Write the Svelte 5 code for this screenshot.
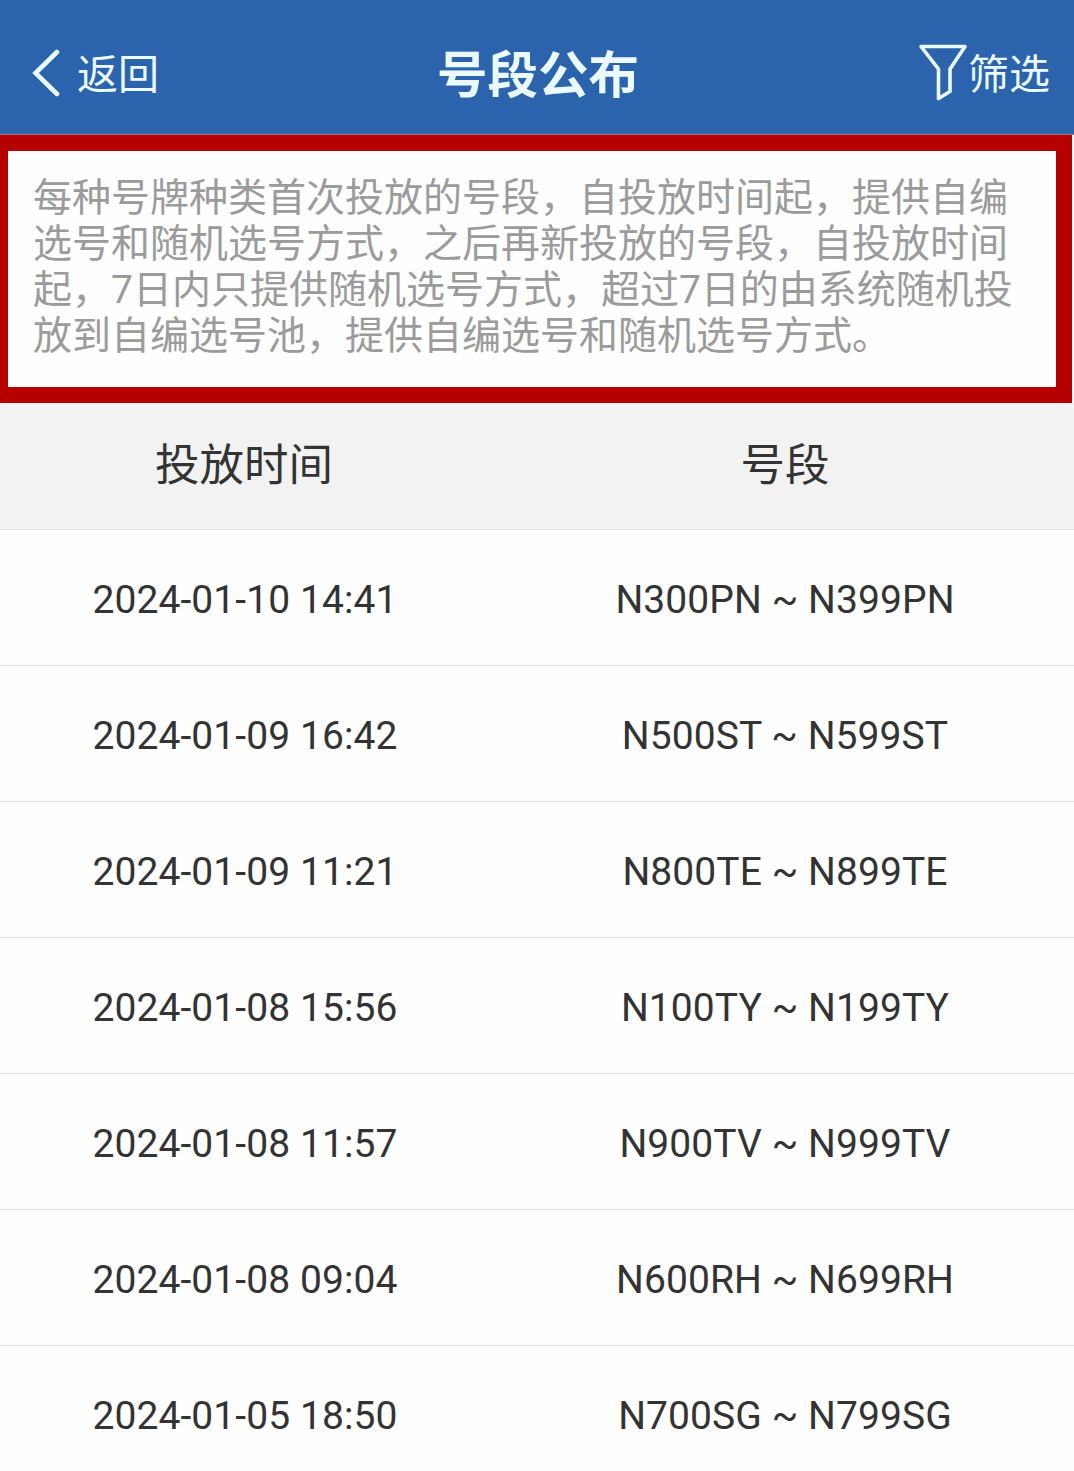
<script lang="ts">
  interface Release {
    time: string;
    range: string;
  }

  const notice = [
    '每种号牌种类首次投放的号段，自投放时间起，提供自编',
    '选号和随机选号方式，之后再新投放的号段，自投放时间',
    '起，7日内只提供随机选号方式，超过7日的由系统随机投',
    '放到自编选号池，提供自编选号和随机选号方式。',
  ];

  const releases: Release[] = [
    { time: '2024-01-10 14:41', range: 'N300PN ~ N399PN' },
    { time: '2024-01-09 16:42', range: 'N500ST ~ N599ST' },
    { time: '2024-01-09 11:21', range: 'N800TE ~ N899TE' },
    { time: '2024-01-08 15:56', range: 'N100TY ~ N199TY' },
    { time: '2024-01-08 11:57', range: 'N900TV ~ N999TV' },
    { time: '2024-01-08 09:04', range: 'N600RH ~ N699RH' },
    { time: '2024-01-05 18:50', range: 'N700SG ~ N799SG' },
  ];
</script>

<div class="page">
  <header class="navbar">
    <button class="nav-button back">
      <svg width="28" height="48" viewBox="0 0 28 48" fill="none">
        <path
          d="M25 3L3.5 24L25 45"
          stroke="currentColor"
          stroke-width="4.6"
          stroke-linecap="round"
          stroke-linejoin="miter"
        />
      </svg>
      <span>返回</span>
    </button>
    <h1>号段公布</h1>
    <button class="nav-button filter">
      <svg width="50" height="58" viewBox="0 0 50 58" fill="none">
        <path
          d="M3 2.5H47L32 25V47.5L20.5 54.5V25Z"
          stroke="currentColor"
          stroke-width="3.6"
          stroke-linejoin="round"
        />
      </svg>
      <span>筛选</span>
    </button>
  </header>

  <section class="notice">
    {#each notice as line}
      <span>{line}</span>
    {/each}
  </section>

  <div class="row head">
    <span>投放时间</span>
    <span>号段</span>
  </div>
  {#each releases as release}
    <div class="row">
      <span>{release.time}</span>
      <span>{release.range}</span>
    </div>
  {/each}
</div>

<style>
  :global(body) {
    margin: 0;
    background: #fff;
  }

  .page {
    width: 1074px;
    height: 1471px;
    overflow: hidden;
    background: #fefefe;
    color: #333;
    font-family: Roboto, 'Noto Sans CJK SC', sans-serif;
  }

  .navbar {
    display: grid;
    grid-template-columns: 1fr auto 1fr;
    align-items: center;
    box-sizing: border-box;
    height: 135px;
    padding: 12px 24px 0 32px;
    border-bottom: 1px solid #a66f86;
    background: #2b64ad;
    color: #eafaff;
  }

  h1 {
    margin: 0;
    padding: 6px 6px 0 0;
    font-size: 50.5px;
    font-weight: 700;
    line-height: 60px;
  }

  .nav-button {
    display: flex;
    align-items: center;
    padding: 0;
    border: 0;
    background: none;
    color: inherit;
    font: inherit;
    font-size: 41px;
    line-height: 60px;
  }

  .nav-button span {
    padding-top: 4px;
  }

  .nav-button svg {
    margin-bottom: 1px;
  }

  .back {
    gap: 17px;
  }

  .filter {
    justify-self: end;
    gap: 0;
  }

  .notice {
    display: flex;
    flex-direction: column;
    box-sizing: border-box;
    width: 1072px;
    height: 268px;
    padding: 24px 0 0 25px;
    border: solid #b60000;
    border-width: 16px 16px 16px 8px;
    color: #9b9b9b;
    font-size: 39px;
    line-height: 46px;
    white-space: nowrap;
  }

  .row {
    display: grid;
    grid-template-columns: 488px 1fr;
    align-items: center;
    box-sizing: border-box;
    height: 136px;
    padding-top: 4px;
    border-bottom: 1px solid #e4e4e4;
    font-size: 39px;
    letter-spacing: 0.08px;
    line-height: 48px;
    text-align: center;
  }

  .row span:first-child {
    padding-left: 2px;
  }

  .row span:last-child {
    padding-left: 8px;
  }

  .head {
    height: 127px;
    padding: 0;
    background: #f2f2f2;
    font-size: 44.5px;
    letter-spacing: 0;
  }

  .head span:first-child {
    padding-left: 0;
  }
</style>
